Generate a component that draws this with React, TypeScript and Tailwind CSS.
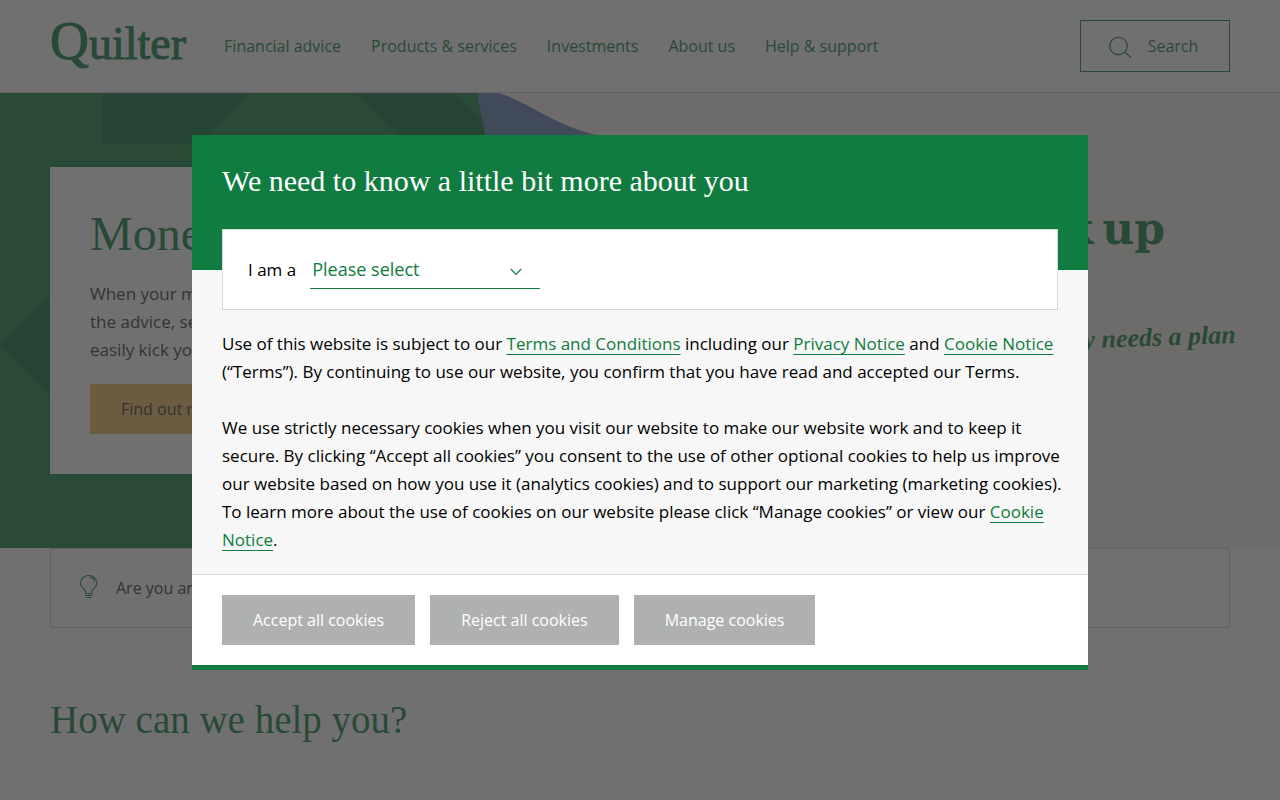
import { useState } from "react";

const navLinks = [
  "Financial advice",
  "Products & services",
  "Investments",
  "About us",
  "Help & support",
];

const cookieActions = [
  "Accept all cookies",
  "Reject all cookies",
  "Manage cookies",
];

function TextLink({ children }) {
  return (
    <a href="#" className="text-[#107c40] underline decoration-1 underline-offset-4">
      {children}
    </a>
  );
}

function SearchIcon() {
  return (
    <svg width="24" height="24" viewBox="0 0 24 24" fill="none" stroke="#107c40" strokeWidth="1.2">
      <circle cx="10.500" cy="12" r="8.7" />
      <path d="M16.700 18.200 L23.500 24" />
    </svg>
  );
}

function BulbIcon() {
  return (
    <svg width="20" height="26" viewBox="0 0 20 26" fill="none" stroke="#107c40" strokeWidth="1.1">
      <path d="M6.500 18.500v-2.200c0-2.600-5-3.300-5-8.100a8.200 7.700 0 0 1 16.400 0c0 4.800-5 5.500-5 8.100v2.200z" />
      <path d="M10.500 2.200c2.700.2 4.600 2.300 4.800 5.200" />
      <path d="M6 20.500h7.600M7.300 22.500h5" />
    </svg>
  );
}

function HeroArt() {
  return (
    <svg className="absolute left-0 top-0" width="640" height="455" viewBox="0 0 640 455">
      <path d="M0 0H480L560 455H0z" fill="#148045" />
      <path d="M102 0H252L202 50H102z" fill="#0d713a" />
      <path d="M355 0H455L484 28L500 145z" fill="#0d713a" />
      <path d="M0 253L50 203V303z" fill="#0d713a" />
      <path d="M477 0H499C530 10 548 29 595 42L620 50H487z" fill="#6280b0" />
    </svg>
  );
}

function Header() {
  return (
    <header className="flex items-center h-[93px] px-[50px] border-b border-[#ccd0d4] text-[#107c40]">
      <a
        href="#"
        className="pb-2 font-['Liberation_Serif'] text-[46px] leading-[56px] [-webkit-text-stroke:1px_#107c40]"
      >
        <span className="text-[54px]">Q</span>uilter
      </a>
      <nav className="flex gap-[30px] ml-[38px]">
        {navLinks.map((link) => (
          <a key={link} href="#">
            {link}
          </a>
        ))}
      </nav>
      <button
        type="button"
        className="flex items-center justify-center gap-4 w-[150px] h-[52px] ml-auto pr-1 border border-[#107c40]"
      >
        <SearchIcon />
        Search
      </button>
    </header>
  );
}

function Hero() {
  return (
    <section className="relative flex justify-between pl-[50px] pr-[44px] py-[74px] bg-[#f8f1e9] overflow-hidden">
      <HeroArt />
      <div className="relative w-[480px] p-10 bg-white text-[#333333]">
        <h1 className="font-['Liberation_Serif'] text-5xl leading-[53px] text-[#107c40] mb-5">
          Money plan
        </h1>
        <p className="text-[17px] leading-7 mb-5">
          When your money has a plan,
          <br />
          the advice, service and support
          <br />
          easily kick your goals into gear
        </p>
        <button type="button" className="h-[50px] px-[31px] bg-[#eeb85e]">
          Find out more
        </button>
      </div>
      <div className="pt-9 text-right text-[#107c40] font-bold">
        <p className="flex justify-end gap-[9px] font-['DejaVu_Serif'] text-[44px] leading-[52px] pr-[71px]">
          <span>check</span>
          <span>up</span>
        </p>
        <p className="font-['Liberation_Serif'] text-[26px] leading-8 italic mt-[69px] -rotate-2">
          money needs a plan
        </p>
      </div>
    </section>
  );
}

function WelcomeModal() {
  const [role, setRole] = useState("");

  return (
    <div className="fixed inset-0 flex items-start justify-center pt-[135px] bg-[#333333]/70">
      <div
        role="dialog"
        aria-labelledby="welcome-title"
        className="w-[70%] bg-[#f7f7f7] border-b-[5px] border-[#107c40] text-black"
      >
        <div className="h-[135px] px-[30px] pt-[30px] bg-[#107c40]">
          <h2 id="welcome-title" className="font-['Liberation_Serif'] text-3xl leading-8 text-white">
            We need to know a little bit more about you
          </h2>
        </div>

        <div className="flex items-center h-[81px] mx-[30px] -mt-[41px] px-[25px] bg-white border border-[#d6d7d8]">
          <label htmlFor="role" className="text-[17px] leading-7">
            I am a
          </label>
          <div className="relative w-[230px] ml-[14px]">
            <select
              id="role"
              value={role}
              onChange={(e) => setRole(e.target.value)}
              className="block w-full h-[39px] pl-[2px] appearance-none border-b border-[#107c40] text-[#107c40] text-lg"
            >
              <option value="">Please select</option>
              <option value="customer">Customer</option>
              <option value="adviser">Financial adviser</option>
            </select>
            <svg
              className="absolute right-[18px] top-[18px] pointer-events-none"
              width="12"
              height="8"
              viewBox="0 0 12 8"
              fill="none"
              stroke="#107c40"
              strokeWidth="1.2"
            >
              <path d="M0.800 1L6 6.500L11.200 1" />
            </svg>
          </div>
        </div>

        <div className="pl-[30px] pr-5 py-5 text-[17px] leading-7">
          <p className="mb-7">
            Use of this website is subject to our <TextLink>Terms and Conditions</TextLink> including our{" "}
            <TextLink>Privacy Notice</TextLink> and <TextLink>Cookie Notice</TextLink> (“Terms”). By
            continuing to use our website, you confirm that you have read and accepted our Terms.
          </p>
          <p>
            We use strictly necessary cookies when you visit our website to make our website work and to
            keep it secure. By clicking “Accept all cookies” you consent to the use of other optional
            cookies to help us improve our website based on how you use it (analytics cookies) and to
            support our marketing (marketing cookies). To learn more about the use of cookies on our
            website please click “Manage cookies” or view our <TextLink>Cookie Notice</TextLink>.
          </p>
        </div>

        <div className="flex gap-[15px] px-[30px] py-5 bg-white border-t border-[#d6d7d8]">
          {cookieActions.map((action) => (
            <button
              key={action}
              type="button"
              className="h-[50px] px-[31px] bg-[#afb1b0] text-white font-medium"
            >
              {action}
            </button>
          ))}
        </div>
      </div>
    </div>
  );
}

export default function App() {
  return (
    <div className="min-h-screen bg-white font-['Open_Sans',sans-serif] text-base">
      <Header />
      <main>
        <Hero />
        <div className="flex items-center gap-[17px] h-20 mx-[50px] px-7 border border-[#ccd0d4] text-[#333333]">
          <BulbIcon />
          Are you an adviser?
        </div>
        <h2 className="px-[50px] pt-[68px] font-['Liberation_Serif'] text-[39px] leading-[48px] text-[#107c40]">
          How can we help you?
        </h2>
      </main>
      <WelcomeModal />
    </div>
  );
}
